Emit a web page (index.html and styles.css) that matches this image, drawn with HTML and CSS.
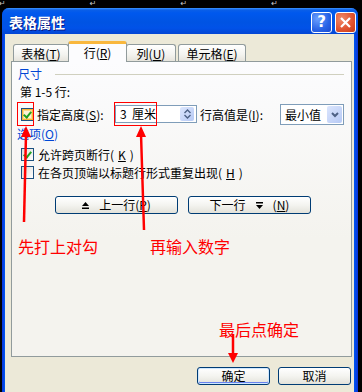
FILE: index.html
```html
<!DOCTYPE html>
<html lang="zh-CN">
<head>
    <meta charset="UTF-8">
    <title>表格属性</title>
    <link rel="stylesheet" href="styles.css">
</head>
<body>
    <div class="marks"><span>↵</span><span>↵</span><span>↵</span><span>↵</span></div>

    <div class="window">
        <div class="titlebar">
            <span class="title">表格属性</span>
            <div class="title-buttons">
                <span class="tbtn help">?</span>
                <span class="tbtn close">
                    <svg width="11" height="11" viewBox="0 0 11 11"><path d="M1 1 L10 10 M10 1 L1 10" stroke="#fff" stroke-width="2.2"/></svg>
                </span>
            </div>
        </div>

        <div class="client">
            <div class="tabs">
                <div class="tab tab-table">表格(<u>T</u>)</div>
                <div class="tab tab-row active">行(<u>R</u>)</div>
                <div class="tab tab-col">列(<u>U</u>)</div>
                <div class="tab tab-cell">单元格(<u>E</u>)</div>
            </div>

            <div class="panel">
                <div class="group-title"><span>尺寸</span><i></i></div>
                <div class="rows-label">第 1-5 行:</div>

                <div class="size-row">
                    <span class="check checked hot"></span>
                    <span class="lbl lbl-height">指定高度(<u>S</u>):</span>
                    <span class="textbox">
                        <span class="value">3&nbsp;&nbsp;厘米</span>
                        <span class="spin">
                            <svg width="7" height="10" viewBox="0 0 7 10"><path d="M0.5 4 L3.5 1 L6.5 4 M0.5 6 L3.5 9 L6.5 6" fill="none" stroke="#4d6185" stroke-width="1.4"/></svg>
                        </span>
                    </span>
                    <span class="lbl lbl-rule">行高值是(<u>I</u>):</span>
                    <span class="combo">
                        <span class="value">最小值</span>
                        <span class="drop">
                            <svg width="8" height="6" viewBox="0 0 8 6"><path d="M1 1 L4 4 L7 1" fill="none" stroke="#4d6185" stroke-width="2"/></svg>
                        </span>
                    </span>
                </div>

                <div class="group-title options">选项(<u>O</u>)</div>

                <div class="check-row first"><span class="check checked"></span>允许跨页断行(<u>K</u>)</div>
                <div class="check-row"><span class="check"></span>在各页顶端以标题行形式重复出现(<u>H</u>)</div>

                <div class="nav-row">
                    <button class="btn">
                        <svg width="7" height="7" viewBox="0 0 7 7"><path d="M3.5 0 L7 4 L0 4 Z M0 5.5 H7 V7 H0 Z" fill="#000"/></svg>
                        <span>上一行(<u>P</u>)</span>
                    </button>
                    <button class="btn">
                        <span>下一行</span>
                        <svg width="7" height="7" viewBox="0 0 7 7"><path d="M0 0 H7 V1.5 H0 Z M0 3 L7 3 L3.5 7 Z" fill="#000"/></svg>
                        <span>(<u>N</u>)</span>
                    </button>
                </div>

                <div class="note-row"><span class="note first">先打上对勾</span><span class="note">再输入数字</span></div>
                <div class="note note-last">最后点确定</div>
            </div>

            <div class="footer">
                <button class="btn default">确定</button>
                <button class="btn">取消</button>
            </div>
        </div>
    </div>

    <svg class="annot" width="362" height="392" viewBox="0 0 362 392">
        <rect x="17.5" y="102.5" width="16" height="23" fill="none" stroke="#f00"/>
        <rect x="114.5" y="102.5" width="42" height="23" fill="none" stroke="#f00"/>
        <path d="M26 134 L24 222" stroke="#f00" stroke-width="2.5"/>
        <path d="M26 126 L31 137 L21 137 Z" fill="#f00"/>
        <path d="M141 134 L144 230" stroke="#f00" stroke-width="2.5"/>
        <path d="M141 126 L146 137 L136 137 Z" fill="#f00"/>
        <path d="M233 334 L233 355" stroke="#f00" stroke-width="2.5"/>
        <path d="M228 353 L238 353 L233 363 Z" fill="#f00"/>
    </svg>
</body>
</html>
```

FILE: styles.css
```css
* {
    margin: 0;
    padding: 0;
    box-sizing: border-box;
}

html, body {
    background: #000;
    font-family: "Noto Sans CJK SC", "Noto Sans", sans-serif;
    font-size: 12px;
    line-height: 12px;
    color: #000;
    overflow: hidden;
}

body {
    position: relative;
    width: 362px;
    height: 392px;
}

u {
    text-decoration: underline;
    text-underline-offset: 1px;
}

.marks {
    display: flex;
    height: 8px;
    margin-left: -1px;
    color: #c8c8c8;
    font-family: "DejaVu Sans", sans-serif;
    font-size: 8px;
    line-height: 8px;
}

.marks span {
    width: 96px;
}

.window {
    margin-left: 2px;
    width: 356px;
    height: 400px;
    border-radius: 7px 7px 0 0;
    background: linear-gradient(to right, #0831d9, #0058ee 3px, #0058ee calc(100% - 4px), #0831d9);
    display: flex;
    flex-direction: column;
}

.titlebar {
    height: 26px;
    display: flex;
    align-items: center;
    justify-content: space-between;
    padding: 0 2px 0 7px;
    border-radius: 7px 7px 0 0;
    background: linear-gradient(#3d95ff 0, #0a5fe8 2px, #0058ee 5px, #0054e3 14px, #0152e8 20px, #0346d4 26px);
}

.title {
    color: #fff;
    font-weight: bold;
    font-size: 14px;
    line-height: 14px;
    text-shadow: 1px 1px 0 #0a1883;
    margin-top: 1px;
}

.title-buttons {
    display: flex;
    gap: 3px;
    margin-top: 2px;
}

.tbtn {
    width: 21px;
    height: 21px;
    border: 1px solid #fff;
    border-radius: 3px;
    display: flex;
    align-items: center;
    justify-content: center;
    color: #fff;
    font-family: "DejaVu Sans", sans-serif;
    font-weight: bold;
    font-size: 15px;
}

.help {
    background: radial-gradient(circle at 30% 30%, #6aa0ff, #2863e6 60%, #1a4bd0);
}

.close {
    background: radial-gradient(circle at 30% 30%, #f08a6a, #e0512e 60%, #c23a14);
}

.client {
    flex: 1;
    margin: 0 4px 0 3px;
    background: #ece9d8;
    padding: 7px 2px 0 6px;
}

.tabs {
    display: flex;
    align-items: flex-end;
    height: 20px;
    padding-left: 2px;
    position: relative;
    z-index: 2;
}

.tab {
    height: 17px;
    border: 1px solid #919b9c;
    border-bottom: none;
    border-radius: 3px 3px 0 0;
    background: linear-gradient(#ffffff, #f3f3ef 60%, #e6e4dc);
    display: flex;
    align-items: center;
    justify-content: center;
    padding-top: 1px;
}

.tab-table {
    width: 56px;
}

.tab-row {
    width: 59px;
    margin: 0 -1px;
}

.tab-col {
    width: 50px;
}

.tab-cell {
    width: 68px;
    margin-left: 2px;
}

.tab.active {
    height: 21px;
    margin-bottom: -1px;
    background: #fcfcfe;
    border-top: 3px solid #f9b73d;
    padding-top: 0;
    position: relative;
    z-index: 3;
}

.panel {
    position: relative;
    width: 341px;
    height: 296px;
    border: 1px solid #919b9c;
    background: linear-gradient(#fcfcfe, #f4f3ee 60%);
    padding: 6px 7px 0 6px;
}

.group-title {
    display: flex;
    align-items: center;
    color: #0046d5;
}

.group-title i {
    flex: 1;
    height: 1px;
    margin-left: 13px;
    margin-top: 1px;
    background: #d0d0bf;
}

.rows-label {
    margin: 6px 0 0 2px;
}

.size-row {
    display: flex;
    align-items: center;
    height: 21px;
    margin-top: 6px;
    padding-left: 3px;
}

.check {
    width: 13px;
    height: 13px;
    flex: none;
    border: 1px solid #1c5180;
    background: linear-gradient(135deg, #dcdcd7, #ffffff);
    position: relative;
}

.check.hot {
    box-shadow: inset 0 0 0 1px #f8b636, inset 0 0 0 2px #fdd889;
    background: #fdf3d6;
}

.check.checked::after {
    content: "";
    position: absolute;
    left: 3px;
    top: 1px;
    width: 3px;
    height: 6px;
    border: solid #21a121;
    border-width: 0 2px 2px 0;
    transform: rotate(40deg);
}

.lbl-height {
    width: 78px;
    margin-left: 3px;
}

.textbox {
    width: 82px;
    height: 18px;
    border: 1px solid #7f9db9;
    background: #fff;
    display: flex;
    align-items: center;
    justify-content: space-between;
    padding: 0 2px 0 4px;
    margin-top: -2px;
}

.spin {
    width: 14px;
    height: 14px;
    border-radius: 2px;
    background: linear-gradient(135deg, #dce6fd, #b6c9f5);
    display: flex;
    align-items: center;
    justify-content: center;
}

.lbl-rule {
    width: 80px;
    margin-left: 3px;
}

.combo {
    width: 64px;
    height: 21px;
    border: 1px solid #7f9db9;
    background: #fff;
    display: flex;
    align-items: center;
    justify-content: space-between;
    padding: 0 1px 0 4px;
}

.drop {
    width: 15px;
    height: 17px;
    border-radius: 2px;
    background: linear-gradient(135deg, #dce6fd, #b6c9f5);
    display: flex;
    align-items: center;
    justify-content: center;
}

.options {
    margin-top: 3px;
    margin-left: -1px;
}

.check-row {
    display: flex;
    align-items: center;
    gap: 4px;
    height: 13px;
    margin-top: 5px;
    padding-left: 3px;
}

.check-row.first {
    margin-top: 8px;
}

.nav-row {
    display: flex;
    gap: 10px;
    margin: 17px 0 0 37px;
}

.btn {
    font-family: inherit;
    font-size: 12px;
    line-height: 12px;
    color: #000;
    height: 18px;
    border: 1px solid #003c74;
    border-radius: 3px;
    background: linear-gradient(#ffffff, #f4f4f0 50%, #e3e2da);
    display: flex;
    align-items: center;
    justify-content: center;
    gap: 10px;
}

.nav-row .btn {
    width: 123px;
}

.note {
    color: #f00;
    font-size: 16px;
    line-height: 18px;
}

.note-row {
    display: flex;
    margin-top: 23px;
}

.note.first {
    width: 132px;
}

.note-last {
    margin: 65px 0 0 201px;
}

.footer {
    display: flex;
    justify-content: flex-end;
    gap: 8px;
    padding: 10px 1px 0 0;
}

.footer .btn {
    width: 73px;
}

.btn.default {
    box-shadow: inset 0 0 0 1px #cee7ff, inset 0 -1px 0 1px #6982ee;
}

.annot {
    position: absolute;
    left: 0;
    top: 0;
    pointer-events: none;
}
```
